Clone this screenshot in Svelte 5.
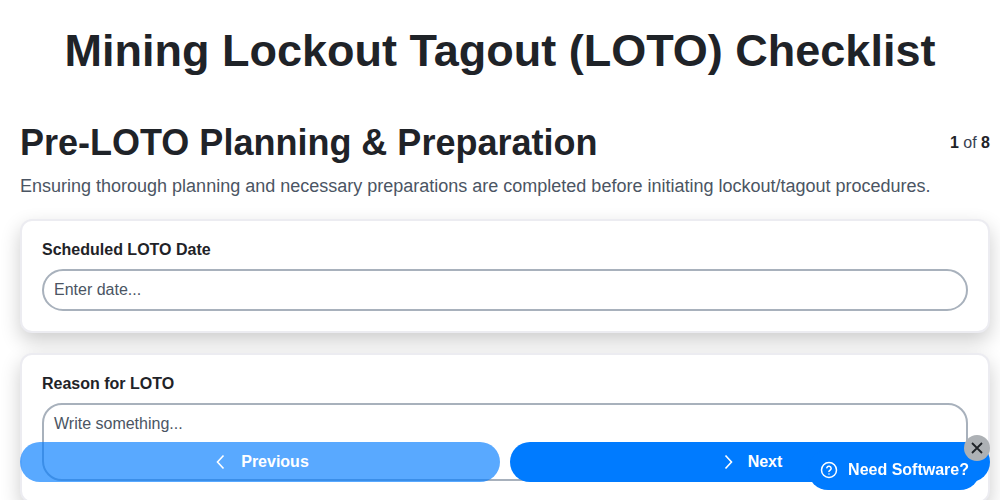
<script>
    let dateValue = '';
    let reason = '';
    let showPromo = true;
</script>

<h1>Mining Lockout Tagout (LOTO) Checklist</h1>

<main class="page">
    <header class="section-head">
        <h2>Pre-LOTO Planning &amp; Preparation</h2>
        <span class="count"><b>1</b> of <b>8</b></span>
    </header>
    <p class="desc">Ensuring thorough planning and necessary preparations are completed before initiating lockout/tagout procedures.</p>

    <div class="card">
        <label for="date">Scheduled LOTO Date</label>
        <input id="date" type="text" placeholder="Enter date..." bind:value={dateValue} />
    </div>

    <div class="card">
        <label for="reason">Reason for LOTO</label>
        <textarea id="reason" placeholder="Write something..." bind:value={reason}></textarea>
    </div>
</main>

<nav class="pager">
    <button class="prev">
        <svg width="24" height="24" viewBox="0 0 24 24" fill="none" stroke="currentColor" stroke-width="1.6"><path d="M14.5 5.5 8.5 12l6 6.5" /></svg>
        Previous
    </button>
    <button>
        <svg width="24" height="24" viewBox="0 0 24 24" fill="none" stroke="currentColor" stroke-width="1.6"><path d="M9.5 5.5 15.5 12l-6 6.5" /></svg>
        Next
    </button>
</nav>

{#if showPromo}
    <div class="promo">
        <svg width="18" height="18" viewBox="0 0 24 24" fill="none" stroke="currentColor" stroke-width="2" stroke-linecap="round">
            <circle cx="12" cy="12" r="10" />
            <path d="M9.1 9a3 3 0 0 1 5.8 1c0 2-3 2.6-3 4" />
            <path d="M12 17.2h.01" />
        </svg>
        Need Software?
        <button class="close" aria-label="Close" onclick={() => (showPromo = false)}>
            <svg width="14" height="14" viewBox="0 0 14 14" stroke="currentColor" stroke-width="1.8"><path d="M2 2l10 10M12 2 2 12" /></svg>
        </button>
    </div>
{/if}

<style>
    :global(body) {
        height: 500px;
        overflow: hidden;
        background: #fff;
        font-family: "Liberation Sans", Arial, sans-serif;
        color: #1f2328;
    }

    .page {
        padding: 0 10px 0 20px;
    }

    h1 {
        margin: 0;
        padding: 25px 0 0;
        font-size: 45px;
        line-height: 52px;
        font-weight: 700;
        text-align: center;
    }

    .section-head {
        display: flex;
        justify-content: space-between;
        align-items: flex-start;
        margin-top: 44px;
    }

    h2 {
        margin: 0;
        font-size: 36px;
        line-height: 44px;
        font-weight: 700;
    }

    .count {
        font-size: 16px;
        line-height: 20px;
        margin-top: 12px;
        color: #374151;
    }

    .count b {
        color: #1f2328;
    }

    .desc {
        margin: 9px 0 21px;
        font-size: 18px;
        line-height: 24px;
        color: #4b5563;
    }

    .card {
        box-sizing: border-box;
        margin-bottom: 19.5px;
        padding: 20px;
        background: #fff;
        border: 2px solid #ececf1;
        border-radius: 12px;
        box-shadow: 0 8px 20px rgba(0, 0, 0, 0.2);
    }

    label {
        display: block;
        margin-bottom: 10px;
        font-size: 16px;
        line-height: 18px;
        font-weight: 700;
    }

    input,
    textarea {
        display: block;
        box-sizing: border-box;
        width: 100%;
        padding: 0 10px;
        background: #fff;
        border: 2px solid #a8b1bc;
        font-family: inherit;
        font-size: 16px;
        color: #374151;
        outline: none;
    }

    input {
        height: 42px;
        border-radius: 21px;
    }

    textarea {
        height: 78px;
        padding-top: 10px;
        border-radius: 20px;
        resize: none;
    }

    input::placeholder,
    textarea::placeholder {
        color: #4b5563;
        opacity: 1;
    }

    .pager {
        position: fixed;
        left: 20px;
        right: 10px;
        bottom: 18px;
        display: grid;
        grid-template-columns: 1fr 1fr;
        gap: 10px;
    }

    .pager button {
        display: flex;
        align-items: center;
        justify-content: center;
        gap: 8px;
        height: 40px;
        padding: 0 8px 0 6px;
        border: 0;
        border-radius: 20px;
        background: #007bff;
        color: #fff;
        font-family: inherit;
        font-size: 16px;
        font-weight: 700;
    }

    .pager .prev {
        opacity: 0.65;
    }

    .promo {
        position: fixed;
        right: 20px;
        bottom: 10px;
        box-sizing: border-box;
        display: flex;
        align-items: center;
        gap: 10px;
        height: 40px;
        padding: 0 11px 0 12px;
        border-radius: 20px;
        background: #007bff;
        color: #fff;
        font-size: 16px;
        font-weight: 700;
    }

    .close {
        position: absolute;
        top: -15px;
        right: -10px;
        display: flex;
        align-items: center;
        justify-content: center;
        width: 26px;
        height: 26px;
        padding: 0;
        border: 0;
        border-radius: 50%;
        background: #adb1b5;
        color: #1f2328;
    }
</style>
